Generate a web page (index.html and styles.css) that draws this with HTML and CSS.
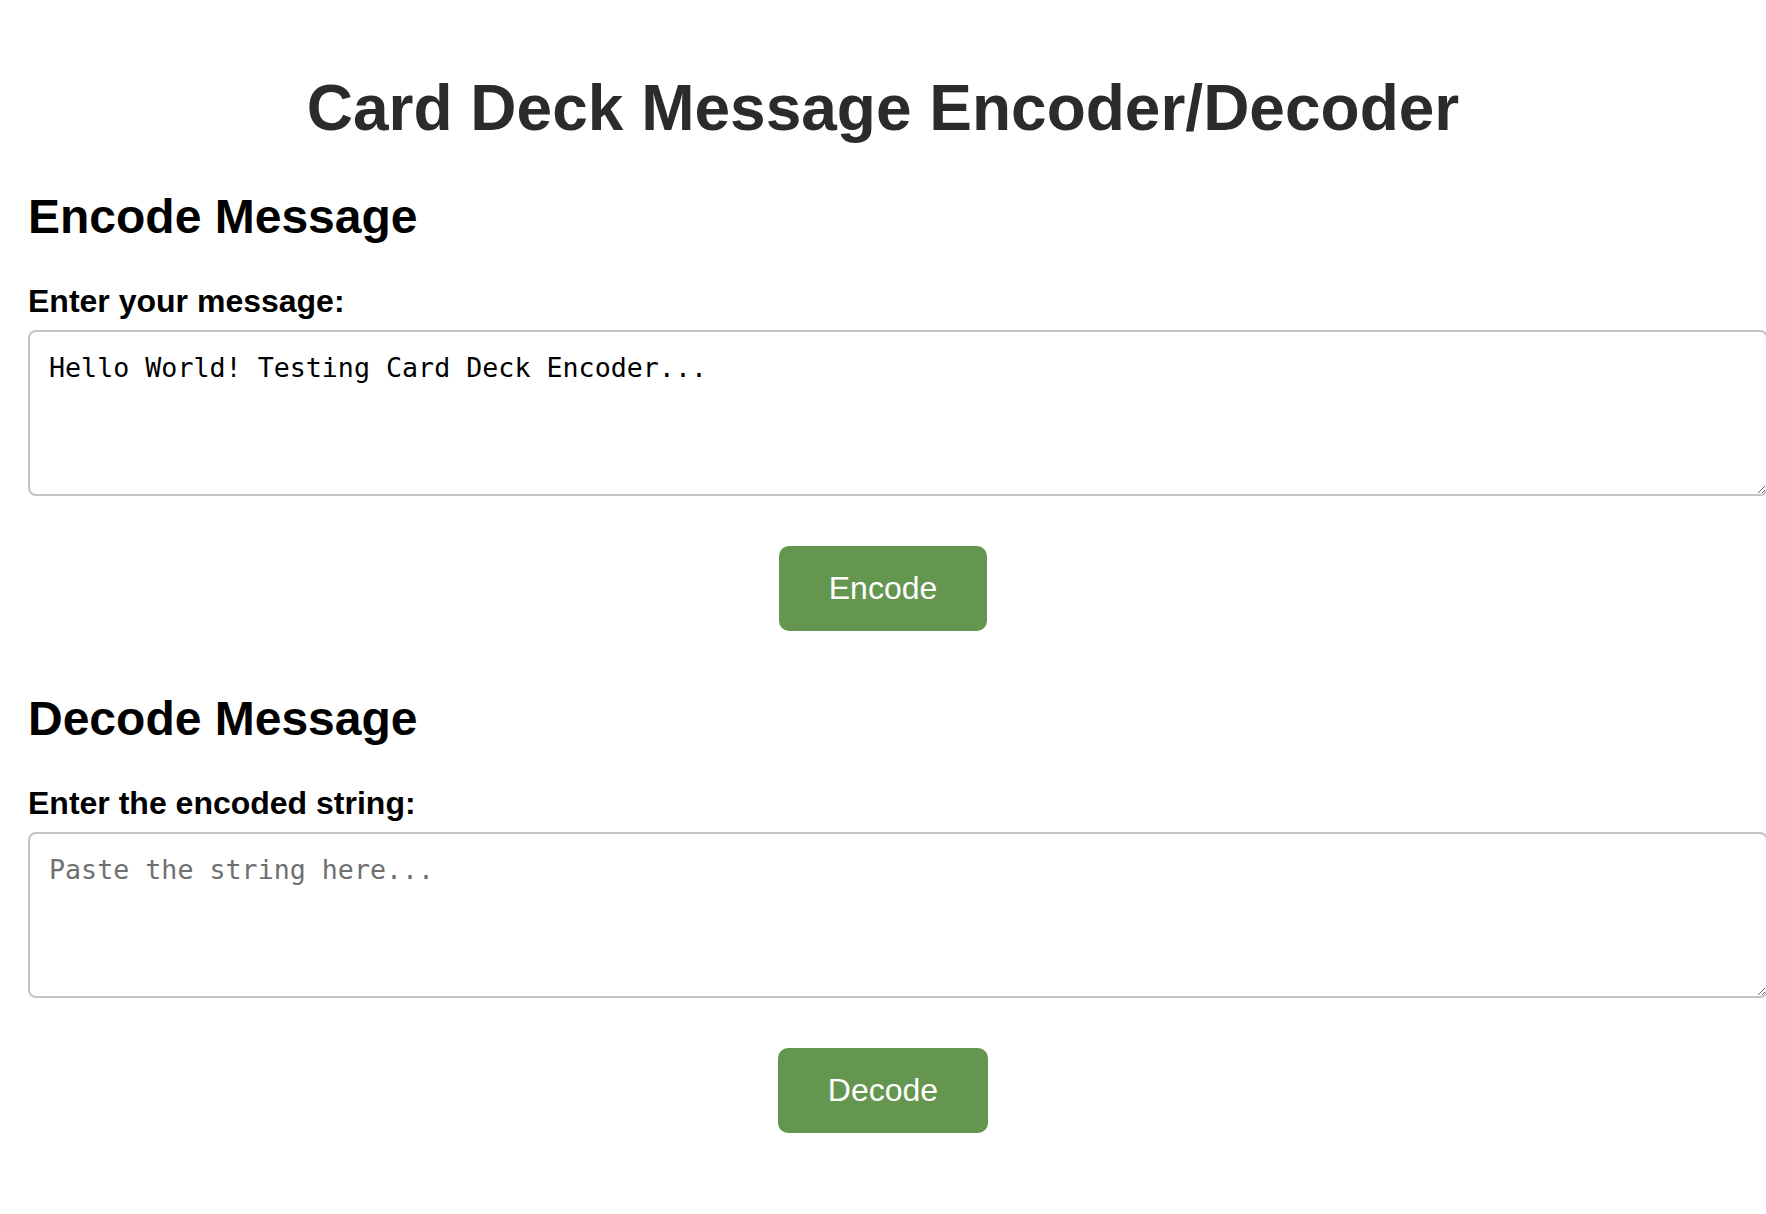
FILE: index.html
```html
<!DOCTYPE html>
<html lang="en">
<head>
<meta charset="utf-8">
<title>Card Deck Message Encoder/Decoder</title>
<link rel="stylesheet" href="styles.css">
</head>
<body>
<main class="page">
  <h1 class="title">Card Deck Message Encoder/Decoder</h1>

  <section class="section section-encode">
    <h2 class="section-title">Encode Message</h2>
    <label class="field-label" for="message">Enter your message:</label>
    <textarea class="field" id="message">Hello World! Testing Card Deck Encoder...</textarea>
    <div class="actions">
      <button class="btn" type="button">Encode</button>
    </div>
  </section>

  <section class="section section-decode">
    <h2 class="section-title">Decode Message</h2>
    <label class="field-label" for="encoded">Enter the encoded string:</label>
    <textarea class="field" id="encoded" placeholder="Paste the string here..."></textarea>
    <div class="actions">
      <button class="btn" type="button">Decode</button>
    </div>
  </section>
</main>
</body>
</html>
```

FILE: styles.css
```css
html {
  overflow-x: hidden;
}

body {
  margin: 0;
  background: #ffffff;
  font-family: "Liberation Sans", Arial, Helvetica, sans-serif;
  font-size: 32px;
  color: #000000;
}

.page {
  padding: 71px 28px 0;
}

.title {
  margin: 0 0 44px;
  font-size: 64px;
  line-height: 74px;
  font-weight: 700;
  text-align: center;
  color: #2b2b2b;
}

.section-title {
  margin: 0 0 38px;
  font-size: 48px;
  line-height: 56px;
  font-weight: 700;
  color: #000000;
}

.field-label {
  display: block;
  margin: 0 0 10px;
  font-size: 32px;
  line-height: 37px;
  font-weight: 700;
}

.field {
  display: block;
  box-sizing: border-box;
  width: calc(100% + 30px);
  height: 166px;
  margin: 0 0 50px;
  padding: 20px 19px;
  border: 2px solid #c4c4c4;
  border-radius: 8px;
  font-family: "DejaVu Sans Mono", "Liberation Mono", monospace;
  font-size: 26.67px;
  color: #000000;
  background: #ffffff;
  resize: both;
}

.field::placeholder {
  color: #707070;
  opacity: 1;
}

.actions {
  text-align: center;
}

.section-encode .actions {
  margin-bottom: 60px;
}

.btn {
  padding: 24px 50px;
  border: none;
  border-radius: 10px;
  background: #64964f;
  color: #ffffff;
  font-family: "Liberation Sans", Arial, Helvetica, sans-serif;
  font-size: 32px;
  line-height: 37px;
  cursor: pointer;
}
```
